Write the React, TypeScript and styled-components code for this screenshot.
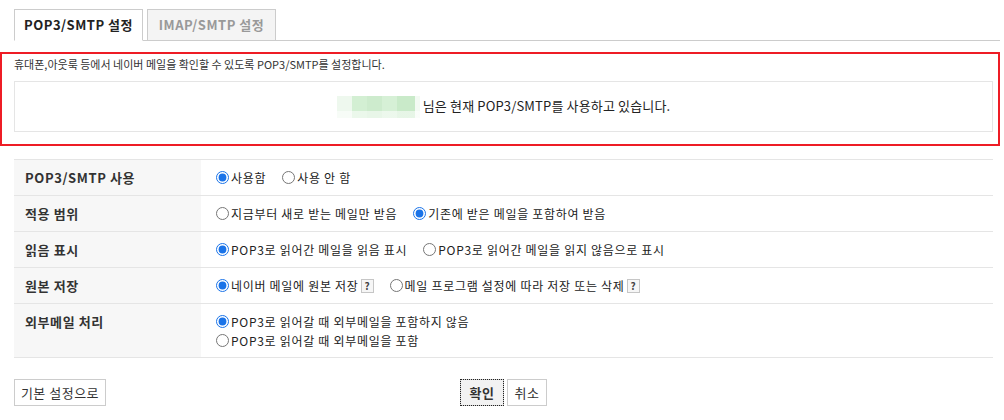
import React, { useState } from 'react'
import styled, { createGlobalStyle } from 'styled-components'

const GlobalStyle = createGlobalStyle`
  html, body {
    margin: 0;
    padding: 0;
    background: #fff;
  }
  body {
    font-family: "Noto Sans CJK KR", "Noto Sans", sans-serif;
    font-size: 12px;
    color: #333;
  }
  * {
    box-sizing: border-box;
  }
`

const Page = styled.div`
  width: 1000px;
  padding-top: 9px;
`

const TabBar = styled.div`
  display: flex;
  gap: 4px;
  margin-left: 14px;
  height: 32px;
  border-bottom: 1px solid #ccc;
`

const Tab = styled.button<{ $active?: boolean }>`
  width: 129px;
  height: ${(p) => (p.$active ? '32px' : '31px')};
  padding: 0;
  border: 1px solid #ccc;
  border-bottom: ${(p) => (p.$active ? '1px solid #fff' : 'none')};
  background: ${(p) => (p.$active ? '#fff' : '#f4f4f4')};
  color: ${(p) => (p.$active ? '#222' : '#999')};
  font-family: inherit;
  font-size: 13px;
  font-weight: bold;
  letter-spacing: 0.5px;
  line-height: 30px;
  cursor: pointer;
`

const Highlight = styled.section`
  margin-top: 11px;
  border: 2px solid #ee1c25;
  padding: 1px 5px 12px 12px;
`

const Desc = styled.p`
  margin: 0 0 8px;
  font-size: 11px;
  line-height: 18px;
  color: #333;
`

const StatusBox = styled.div`
  border: 1px solid #e5e5e5;
  padding: 14px 0 13px;
  text-align: center;
  font-size: 13px;
  letter-spacing: 0.15px;
  line-height: 20px;
  color: #222;
`

const Masked = styled.span`
  display: inline-block;
  width: 83px;
  height: 22px;
  margin-right: 3px;
  vertical-align: middle;
  background:
    linear-gradient(180deg, transparent 0 70%, rgba(255, 255, 255, 0.55) 70% 100%),
    linear-gradient(90deg, #eef8ee 0 15px, #d3efd3 15px 30px, #cdebcd 30px 45px, #d6f0d6 45px 60px, #c9eac9 60px 78px, #f3faf3 78px);
`

const Content = styled.div`
  padding: 13px 7px 0 14px;
`

const Table = styled.div`
  border-top: 1px solid #e5e5e5;
`

const Row = styled.div`
  display: grid;
  grid-template-columns: 187px 1fr;
  border-bottom: 1px solid #e5e5e5;
`

const Head = styled.div`
  background: #f7f7f7;
  padding: 8px 11px;
  font-size: 13px;
  font-weight: bold;
  letter-spacing: 0.6px;
  line-height: 19px;
  color: #333;
`

const Cell = styled.div<{ $stack?: boolean }>`
  display: flex;
  flex-direction: ${(p) => (p.$stack ? 'column' : 'row')};
  align-items: ${(p) => (p.$stack ? 'flex-start' : 'center')};
  padding: ${(p) => (p.$stack ? '8px 15px 7px' : '8px 15px')};
  line-height: 19px;
`

const Option = styled.label`
  display: inline-flex;
  align-items: center;
  margin-right: 16px;
  font-size: 12px;
  letter-spacing: 0.7px;
  color: #222;
  cursor: pointer;
  white-space: nowrap;
`

const Radio = styled.input`
  width: 13px;
  height: 13px;
  margin: 0 2px 0 0;
  accent-color: #1a73e8;
`

const Help = styled.span`
  display: inline-block;
  width: 13px;
  height: 14px;
  margin-left: 2px;
  border: 1px solid #c6c6c6;
  background: #f6f6f6;
  color: #444;
  font-size: 10px;
  font-weight: bold;
  letter-spacing: 0;
  line-height: 12px;
  text-align: center;
`

const Footer = styled.div`
  position: relative;
  display: flex;
  justify-content: center;
  gap: 3px;
  margin-top: 21px;
`

const Button = styled.button<{ $primary?: boolean; $width: number }>`
  width: ${(p) => p.$width}px;
  height: 27px;
  padding: 0;
  border: 1px solid #ccc;
  background: ${(p) => (p.$primary ? '#f2f2f2' : '#fff')};
  color: #333;
  font-family: inherit;
  font-size: 13px;
  font-weight: ${(p) => (p.$primary ? 'bold' : 'normal')};
  letter-spacing: 0.5px;
  outline: ${(p) => (p.$primary ? '1px dotted #222' : 'none')};
  outline-offset: -1px;
  cursor: pointer;
`

const ResetButton = styled(Button)`
  position: absolute;
  left: 0;
  top: 0;
`

type Opt = { value: string; label: string; help?: boolean }

const rows: { key: string; title: string; stack?: boolean; options: Opt[]; initial: string }[] = [
  {
    key: 'use',
    title: 'POP3/SMTP 사용',
    initial: 'on',
    options: [
      { value: 'on', label: '사용함' },
      { value: 'off', label: '사용 안 함' },
    ],
  },
  {
    key: 'range',
    title: '적용 범위',
    initial: 'all',
    options: [
      { value: 'new', label: '지금부터 새로 받는 메일만 받음' },
      { value: 'all', label: '기존에 받은 메일을 포함하여 받음' },
    ],
  },
  {
    key: 'read',
    title: '읽음 표시',
    initial: 'read',
    options: [
      { value: 'read', label: 'POP3로 읽어간 메일을 읽음 표시' },
      { value: 'unread', label: 'POP3로 읽어간 메일을 읽지 않음으로 표시' },
    ],
  },
  {
    key: 'keep',
    title: '원본 저장',
    initial: 'keep',
    options: [
      { value: 'keep', label: '네이버 메일에 원본 저장', help: true },
      { value: 'client', label: '메일 프로그램 설정에 따라 저장 또는 삭제', help: true },
    ],
  },
  {
    key: 'external',
    title: '외부메일 처리',
    stack: true,
    initial: 'exclude',
    options: [
      { value: 'exclude', label: 'POP3로 읽어갈 때 외부메일을 포함하지 않음' },
      { value: 'include', label: 'POP3로 읽어갈 때 외부메일을 포함' },
    ],
  },
]

const App: React.FC = () => {
  const [tab, setTab] = useState('pop')
  const [values, setValues] = useState<Record<string, string>>(
    Object.fromEntries(rows.map((r) => [r.key, r.initial]))
  )

  return (
    <Page>
      <GlobalStyle />
      <TabBar>
        <Tab $active={tab === 'pop'} onClick={() => setTab('pop')}>POP3/SMTP 설정</Tab>
        <Tab $active={tab === 'imap'} onClick={() => setTab('imap')}>IMAP/SMTP 설정</Tab>
      </TabBar>

      <Highlight>
        <Desc>휴대폰,아웃룩 등에서 네이버 메일을 확인할 수 있도록 POP3/SMTP를 설정합니다.</Desc>
        <StatusBox>
          <Masked />
          님은 현재 POP3/SMTP를 사용하고 있습니다.
        </StatusBox>
      </Highlight>

      <Content>
        <Table>
          {rows.map((row) => (
            <Row key={row.key}>
              <Head>{row.title}</Head>
              <Cell $stack={row.stack}>
                {row.options.map((opt) => (
                  <Option key={opt.value}>
                    <Radio
                      type="radio"
                      name={row.key}
                      value={opt.value}
                      checked={values[row.key] === opt.value}
                      onChange={() => setValues({ ...values, [row.key]: opt.value })}
                    />
                    {opt.label}
                    {opt.help && <Help>?</Help>}
                  </Option>
                ))}
              </Cell>
            </Row>
          ))}
        </Table>

        <Footer>
          <ResetButton $width={92}>기본 설정으로</ResetButton>
          <Button $primary $width={44}>확인</Button>
          <Button $width={40}>취소</Button>
        </Footer>
      </Content>
    </Page>
  )
}

export default App
